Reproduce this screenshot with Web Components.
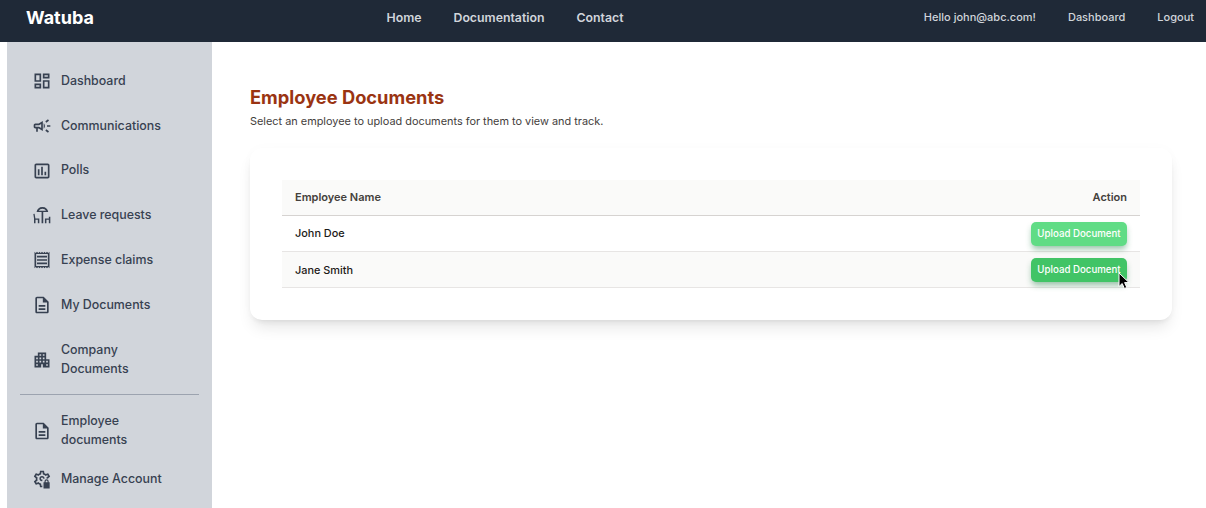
<!DOCTYPE html>
<html>
<head>
<meta charset="utf-8">
<title>Watuba</title>
<style>
  html, body { margin: 0; padding: 0; height: 100%; overflow: hidden; background: #fff; }
  body { font-family: Inter, "Liberation Sans", sans-serif; }
</style>
</head>
<body>
<app-shell>
  <top-bar slot="top"></top-bar>
  <side-nav slot="side">
    <nav-item icon="dashboard">Dashboard</nav-item>
    <nav-item icon="campaign">Communications</nav-item>
    <nav-item icon="poll">Polls</nav-item>
    <nav-item icon="deck">Leave requests</nav-item>
    <nav-item icon="receipt">Expense claims</nav-item>
    <nav-item icon="doc">My Documents</nav-item>
    <nav-item icon="apartment" style="padding-top: 14.2px">Company Documents</nav-item>
    <nav-divider></nav-divider>
    <nav-item icon="doc" style="padding-bottom: 7.3px">Employee documents</nav-item>
    <nav-item icon="gearlock">Manage Account</nav-item>
  </side-nav>
  <docs-page>
    <docs-table>
      <docs-row name="John Doe"><upload-button>Upload Document</upload-button></docs-row>
      <docs-row name="Jane Smith" striped><upload-button hovered>Upload Document</upload-button></docs-row>
    </docs-table>
  </docs-page>
</app-shell>
<script>
const ICONS = {
  dashboard: '<path d="M19 5v2h-4V5h4M9 5v6H5V5h4m10 8v6h-4v-6h4M9 17v2H5v-2h4M21 3h-8v6h8V3zM11 3H3v10h8V3zm10 8h-8v10h8V11zm-10 4H3v6h8v-6z"/>',
  campaign: '<path d="M18 11v2h4v-2h-4zm-2 6.61c.96.71 2.21 1.65 3.2 2.39.4-.53.8-1.07 1.2-1.6-.99-.74-2.24-1.68-3.2-2.4-.4.54-.8 1.08-1.2 1.61zM20.4 5.6c-.4-.53-.8-1.07-1.2-1.6-.99.74-2.24 1.68-3.2 2.4.4.53.8 1.07 1.2 1.6.96-.72 2.21-1.65 3.2-2.4zM4 9c-1.1 0-2 .9-2 2v2c0 1.1.9 2 2 2h1v4h2v-4h1l5 3V6L8 9H4zm5.03 1.71L11 9.53v4.94l-1.97-1.18-.48-.29H4v-2h4.55l.48-.29zM15.5 12c0-1.33-.58-2.53-1.5-3.35v6.69c.92-.81 1.5-2.01 1.5-3.34z"/>',
  poll: '<path d="M19 3H5c-1.1 0-2 .9-2 2v14c0 1.1.9 2 2 2h14c1.1 0 2-.9 2-2V5c0-1.1-.9-2-2-2zm0 16H5V5h14v14zM7 10h2v7H7zm4-3h2v10h-2zm4 6h2v4h-2z"/>',
  deck: '<path fill-rule="evenodd" d="M12.500 2.500C8.500 2.500 6 5 5.500 8.500h6V22h2V8.500h6C19 5 16.500 2.500 12.500 2.500zM8.200 6.800C9 5.300 10.500 4.400 12.500 4.400s3.500.9 4.300 2.400H8.200zM3.100 10.500l-1.500.3.800 5V22h1.800v-4.200h2.800V22h1.800v-5.800H4.100zM15.500 16.200V22h1.800v-4.200h2.900V22H22v-8h-1.800v2.200h-4.700z"/>',
  receipt: '<path d="M19.5 3.5 18 2l-1.5 1.5L15 2l-1.5 1.5L12 2l-1.5 1.5L9 2 7.5 3.5 6 2 4.5 3.5 3 2v20l1.5-1.5L6 22l1.5-1.5L9 22l1.5-1.5L12 22l1.5-1.5L15 22l1.5-1.5L18 22l1.5-1.5L21 22V2l-1.5 1.5zM19 19.09H5V4.91h14v14.18zM6 15h12v2H6zm0-4h12v2H6zm0-4h12v2H6z"/>',
  doc: '<path d="M8 16h8v2H8zm0-4h8v2H8zm6-10H6c-1.1 0-2 .9-2 2v16c0 1.1.89 2 1.99 2H18c1.1 0 2-.9 2-2V8l-6-6zm4 18H6V4h7v5h5v11z"/>',
  apartment: '<path d="M17 11V3H7v4H3v14h8v-4h2v4h8V11h-4zM7 19H5v-2h2v2zm0-4H5v-2h2v2zm0-4H5V9h2v2zm4 4H9v-2h2v2zm0-4H9V9h2v2zm0-4H9V5h2v2zm4 8h-2v-2h2v2zm0-4h-2V9h2v2zm0-4h-2V5h2v2zm4 12h-2v-2h2v2zm0-4h-2v-2h2v2z"/>',
  gearlock: '<path d="M19.43 12.98c.04-.32.07-.64.07-.98 0-.34-.03-.66-.07-.98l2.11-1.65c.19-.15.24-.42.12-.64l-2-3.46c-.09-.16-.26-.25-.44-.25-.06 0-.12.01-.17.03l-2.49 1c-.52-.4-1.08-.73-1.69-.98l-.38-2.65C14.46 2.18 14.25 2 14 2h-4c-.25 0-.46.18-.49.42l-.38 2.65c-.61.25-1.17.59-1.69.98l-2.49-1c-.06-.02-.12-.03-.18-.03-.17 0-.34.09-.43.25l-2 3.46c-.13.22-.07.49.12.64l2.11 1.65c-.04.32-.07.65-.07.98 0 .33.03.66.07.98l-2.11 1.65c-.19.15-.24.42-.12.64l2 3.46c.09.16.26.25.44.25.06 0 .12-.01.17-.03l2.49-1c.52.4 1.08.73 1.69.98l.38 2.65c.03.24.24.42.49.42h4c.25 0 .46-.18.49-.42l.38-2.65c.61-.25 1.17-.59 1.69-.98l2.49 1c.06.02.12.03.18.03.17 0 .34-.09.43-.25l2-3.46c.12-.22.07-.49-.12-.64l-2.11-1.65zm-1.98-1.71c.04.31.05.52.05.73 0 .21-.02.43-.05.73l-.14 1.13.89.7 1.08.84-.7 1.21-1.27-.51-1.04-.42-.9.68c-.43.32-.84.56-1.25.73l-1.06.43-.16 1.13-.2 1.35h-1.4l-.19-1.35-.16-1.13-1.06-.43c-.43-.18-.83-.41-1.23-.71l-.91-.7-1.06.43-1.27.51-.7-1.21 1.08-.84.89-.7-.14-1.13c-.03-.31-.05-.54-.05-.74s.02-.43.05-.73l.14-1.13-.89-.7-1.08-.84.7-1.21 1.27.51 1.04.42.9-.68c.43-.32.84-.56 1.25-.73l1.06-.43.16-1.13.2-1.35h1.39l.19 1.35.16 1.13 1.06.43c.43.18.83.41 1.23.71l.91.7 1.06-.43 1.27-.51.7 1.21-1.07.85-.89.7.14 1.13z"/><circle cx="12" cy="11.5" r="2.2" fill="none" stroke="currentColor" stroke-width="1.8"/><rect x="12.4" y="11.6" width="12" height="12.4" fill="#d1d5db"/><path d="M15 16v-1.2a2.5 2.5 0 0 1 5 0V16h1.2v7.5h-7.4V16zm1.4 0h2.2v-1.2a1.1 1.1 0 0 0-2.2 0z"/>'
};

class AppShell extends HTMLElement {
  constructor() {
    super();
    this.attachShadow({ mode: 'open' }).innerHTML = `
      <style>
        :host { display: grid; grid-template-columns: 212px 1fr; grid-template-rows: 42px 1fr; height: 508px; overflow: hidden; }
        .top { grid-column: 1 / -1; display: block; }
      </style>
      <slot class="top" name="top"></slot>
      <slot name="side"></slot>
      <slot></slot>`;
  }
}

class TopBar extends HTMLElement {
  constructor() {
    super();
    this.attachShadow({ mode: 'open' }).innerHTML = `
      <style>
        :host { display: flex; height: 42px; box-sizing: border-box; background: #1f2937; color: #d1d5db; padding: 0 12px 8px 26px; align-items: center; }
        .logo { color: #fff; font-size: 18px; font-weight: 700; width: 360.5px; }
        .center { display: flex; gap: 32px; font-size: 12.3px; font-weight: 600; }
        .right { margin-left: auto; display: flex; gap: 32px; font-size: 11px; font-weight: 500; }
      </style>
      <div class="logo">Watuba</div>
      <div class="center"><span>Home</span><span>Documentation</span><span>Contact</span></div>
      <div class="right"><span>Hello john@abc.com!</span><span>Dashboard</span><span>Logout</span></div>`;
  }
}

class SideNav extends HTMLElement {
  constructor() {
    super();
    this.attachShadow({ mode: 'open' }).innerHTML = `
      <style>
        :host { display: block; margin-left: 7px; background: #d1d5db; padding: 16.7px 13px 0 13px; height: 466px; box-sizing: border-box; overflow: hidden; }
      </style>
      <slot></slot>`;
  }
}

class NavItem extends HTMLElement {
  constructor() {
    super();
    const name = this.getAttribute('icon');
    this.attachShadow({ mode: 'open' }).innerHTML = `
      <style>
        :host { display: flex; align-items: center; gap: 9px; padding: 12.375px 0 12.375px 12px; color: #374151; font-size: 12.4px; line-height: 18.5px; font-weight: 500; }
        svg { width: 20px; height: 20px; flex: none; fill: currentColor; }
        .label { width: 110px; }
      </style>
      <svg viewBox="0 0 24 24">${ICONS[name]}</svg>
      <span class="label"><slot></slot></span>`;
  }
}

class NavDivider extends HTMLElement {
  constructor() {
    super();
    this.attachShadow({ mode: 'open' }).innerHTML = `
      <style>
        :host { display: block; height: 1px; background: #9ca3af; margin: 3.1px 0 5.1px; }
      </style>`;
  }
}

class DocsPage extends HTMLElement {
  constructor() {
    super();
    this.attachShadow({ mode: 'open' }).innerHTML = `
      <style>
        :host { display: block; padding: 43px 34px 0 38px; }
        h1 { margin: 0; color: #9a3412; font-size: 18.3px; line-height: 24px; font-weight: 700; }
        p { margin: 4px 0 0; color: #44403c; font-size: 10.9px; line-height: 16px; }
        .card { margin-top: 19px; padding: 32px; background: #fff; border-radius: 12px; box-shadow: 0 10px 15px -3px rgba(0,0,0,.1), 0 4px 6px -4px rgba(0,0,0,.1), 0 0 12px rgba(0,0,0,.02); }
      </style>
      <h1>Employee Documents</h1>
      <p>Select an employee to upload documents for them to view and track.</p>
      <div class="card"><slot></slot></div>`;
  }
}

class DocsTable extends HTMLElement {
  constructor() {
    super();
    this.attachShadow({ mode: 'open' }).innerHTML = `
      <style>
        :host { display: block; font-size: 11px; }
        .head { display: flex; justify-content: space-between; align-items: center; height: 34px; padding: 0 13px 1px; background: #fafaf9; border-bottom: 1px solid #d6d3d1; color: #44403c; font-weight: 600; }
      </style>
      <div class="head"><span>Employee Name</span><span>Action</span></div>
      <slot></slot>`;
  }
}

class DocsRow extends HTMLElement {
  constructor() {
    super();
    this.attachShadow({ mode: 'open' }).innerHTML = `
      <style>
        :host { display: flex; justify-content: space-between; align-items: center; height: 35px; padding: 0 13px; border-bottom: 1px solid #e7e5e4; color: #1c1917; font-weight: 500; font-size: 10.9px; }
        :host([striped]) { background: #fafaf9; }
        span { margin-bottom: 1px; }
        :host([striped]) span { margin-bottom: 0; }
      </style>
      <span>${this.getAttribute('name')}</span>
      <slot></slot>`;
  }
}

class UploadButton extends HTMLElement {
  constructor() {
    super();
    this.attachShadow({ mode: 'open' }).innerHTML = `
      <style>
        :host { display: block; position: relative; width: 96px; height: 24px; line-height: 23px; text-align: center; border-radius: 5px; background: #60dc85; color: #fff; font-size: 9.7px; font-weight: 500; box-shadow: 0 4px 6px -1px rgba(20,120,60,.45); }
        :host([hovered]) { background: #41c466; }
        svg { position: absolute; left: 87px; top: 14px; width: 12px; height: 18px; display: none; }
        :host([hovered]) svg { display: block; }
      </style>
      <slot></slot>
      <svg viewBox="0 0 12 18"><path d="M1 1v13.5l3.2-3 2.2 5 2.4-1-2.2-4.900h4.400z" fill="#000" stroke="#fff" stroke-width="1"/></svg>`;
  }
}

customElements.define('app-shell', AppShell);
customElements.define('top-bar', TopBar);
customElements.define('side-nav', SideNav);
customElements.define('nav-item', NavItem);
customElements.define('nav-divider', NavDivider);
customElements.define('docs-page', DocsPage);
customElements.define('docs-table', DocsTable);
customElements.define('docs-row', DocsRow);
customElements.define('upload-button', UploadButton);
</script>
</body>
</html>
